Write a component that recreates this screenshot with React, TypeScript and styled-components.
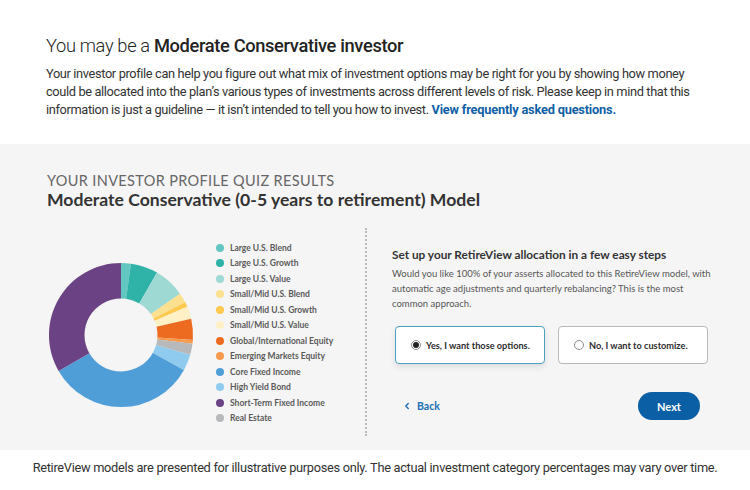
import React from "react";
import styled, { createGlobalStyle } from "styled-components";
import { ChevronLeft } from "lucide-react";

const GlobalStyle = createGlobalStyle`
  html, body {
    margin: 0;
    padding: 0;
    background: #ffffff;
  }
  * {
    box-sizing: border-box;
  }
`;

interface Slice {
  label: string;
  color: string;
  from: number;
  to: number;
}

// angles in degrees, clockwise from 12 o'clock
const slices: Slice[] = [
  { label: "Large U.S. Blend", color: "#62c6c1", from: 0, to: 8 },
  { label: "Large U.S. Growth", color: "#2fb3a8", from: 8, to: 30 },
  { label: "Large U.S. Value", color: "#9ed9d3", from: 30, to: 55 },
  { label: "Small/Mid U.S. Blend", color: "#fbe08f", from: 55, to: 63 },
  { label: "Small/Mid U.S. Growth", color: "#fdc94e", from: 63, to: 67 },
  { label: "Small/Mid U.S. Value", color: "#fff0c6", from: 67, to: 77 },
  { label: "Global/International Equity", color: "#ec6b21", from: 77, to: 94 },
  { label: "Emerging Markets Equity", color: "#f59b50", from: 94, to: 97 },
  { label: "Core Fixed Income", color: "#4f9ed8", from: 119, to: 240 },
  { label: "High Yield Bond", color: "#8ecbef", from: 106, to: 119 },
  { label: "Short-Term Fixed Income", color: "#6b4283", from: 240, to: 360 },
  { label: "Real Estate", color: "#b7b9ba", from: 97, to: 106 },
];

const point = (cx: number, cy: number, r: number, deg: number) => {
  const rad = ((deg - 90) * Math.PI) / 180;
  return [cx + r * Math.cos(rad), cy + r * Math.sin(rad)];
};

const arcPath = (from: number, to: number) => {
  const cx = 75;
  const cy = 75;
  const R = 73;
  const r = 37;
  const end = to >= 360 ? 359.99 : to;
  const large = end - from > 180 ? 1 : 0;
  const [x1, y1] = point(cx, cy, R, from);
  const [x2, y2] = point(cx, cy, R, end);
  const [x3, y3] = point(cx, cy, r, end);
  const [x4, y4] = point(cx, cy, r, from);
  return `M${x1} ${y1} A${R} ${R} 0 ${large} 1 ${x2} ${y2} L${x3} ${y3} A${r} ${r} 0 ${large} 0 ${x4} ${y4} Z`;
};

const Page = styled.div`
  width: 750px;
  font-family: Roboto, "Liberation Sans", sans-serif;
  color: #2b2b2b;
`;

const Intro = styled.section`
  height: 144px;
  padding: 35px 40px 0 46px;
`;

const Title = styled.h1`
  margin: 0 0 8px;
  font-size: 18.3px;
  font-weight: 300;
  letter-spacing: -0.35px;
  line-height: 22px;
  color: #222;

  b {
    font-weight: 500;
  }
`;

const IntroText = styled.p`
  margin: 0;
  font-size: 12.8px;
  line-height: 18px;
  letter-spacing: -0.36px;
  color: #333;
`;

const FaqLink = styled.a`
  color: #0f5fa6;
  font-weight: 700;
  letter-spacing: -0.2px;
  text-decoration: none;
`;

const Band = styled.section`
  background: #f5f5f5;
  height: 306px;
  padding: 28px 0 0 47px;
  font-family: Lato, "Liberation Sans", sans-serif;
`;

const Eyebrow = styled.div`
  font-size: 14.5px;
  font-weight: 400;
  letter-spacing: 0.35px;
  color: #666;
  line-height: 18px;
`;

const ModelTitle = styled.h2`
  margin: 0;
  font-size: 17.6px;
  font-weight: 700;
  color: #333;
  line-height: 20px;
`;

const Content = styled.div`
  display: flex;
  margin-top: 18px;
  height: 210px;
`;

const ChartArea = styled.div`
  width: 318px;
  display: flex;
  align-items: center;
  gap: 21px;
`;

const Donut = styled.svg`
  width: 148px;
  height: 148px;
  flex: none;
  margin-top: 4px;
`;

const Legend = styled.ul`
  list-style: none;
  margin: 0;
  padding: 0;
`;

const LegendItem = styled.li<{ $color: string }>`
  display: flex;
  align-items: center;
  gap: 6px;
  height: 15.5px;
  font-size: 8.5px;
  font-weight: 700;
  color: #5a5a5a;
  white-space: nowrap;

  &::before {
    content: "";
    width: 8px;
    height: 8px;
    border-radius: 50%;
    background: ${(p) => p.$color};
  }
`;

const Divider = styled.div`
  width: 0;
  border-left: 2px dotted #b9b9b9;
  height: 208px;
`;

const Panel = styled.div`
  width: 360px;
  padding: 20px 0 0 25px;
`;

const PanelTitle = styled.h3`
  margin: 0 0 4px;
  font-size: 11.8px;
  font-weight: 700;
  color: #333;
  line-height: 14px;
`;

const PanelText = styled.p`
  margin: 0;
  width: 320px;
  font-size: 9.5px;
  line-height: 15px;
  color: #555;
`;

const Options = styled.div`
  display: flex;
  gap: 13px;
  margin: 15px 0 0 3px;
`;

const Option = styled.label<{ $selected?: boolean }>`
  width: 150px;
  height: 38px;
  flex: none;
  display: flex;
  align-items: center;
  gap: 5px;
  padding-left: 15px;
  background: #fff;
  border-radius: 4px;
  border: 1px solid ${(p) => (p.$selected ? "#4aa3bc" : "#b9b9b9")};
  box-shadow: ${(p) => (p.$selected ? "0 3px 6px rgba(0,0,0,0.1)" : "none")};
  font-size: 9.2px;
  font-weight: 700;
  color: #2d2d2d;
  white-space: nowrap;
`;

const Radio = styled.span<{ $checked?: boolean }>`
  width: 10px;
  height: 10px;
  border-radius: 50%;
  border: 1px solid #8f8f8f;
  display: flex;
  align-items: center;
  justify-content: center;

  &::after {
    content: "";
    width: 6px;
    height: 6px;
    border-radius: 50%;
    background: ${(p) => (p.$checked ? "#222" : "transparent")};
  }
`;

const Actions = styled.div`
  display: flex;
  align-items: center;
  justify-content: space-between;
  margin: 28px 0 0 10px;
  width: 298px;
`;

const BackLink = styled.a`
  display: flex;
  align-items: center;
  gap: 5px;
  color: #1a6fb6;
  font-size: 10.5px;
  font-weight: 700;
  text-decoration: none;
`;

const NextButton = styled.button`
  width: 62px;
  height: 28px;
  border: none;
  border-radius: 14px;
  background: #0b5fa5;
  color: #fff;
  font-family: Lato, "Liberation Sans", sans-serif;
  font-size: 11px;
  font-weight: 700;
`;

const Footer = styled.p`
  margin: 0;
  padding: 10px 0;
  text-align: center;
  font-size: 12.8px;
  line-height: 16px;
  letter-spacing: -0.3px;
  color: #333;
`;

export default function App() {
  return (
    <Page>
      <GlobalStyle />
      <Intro>
        <Title>
          You may be a <b>Moderate Conservative investor</b>
        </Title>
        <IntroText>
          Your investor profile can help you figure out what mix of investment
          options may be right for you by showing how money could be allocated
          into the plan’s various types of investments across different levels
          of risk. Please keep in mind that this information is just a
          guideline — it isn’t intended to tell you how to invest.{" "}
          <FaqLink href="#">View frequently asked questions.</FaqLink>
        </IntroText>
      </Intro>
      <Band>
        <Eyebrow>YOUR INVESTOR PROFILE QUIZ RESULTS</Eyebrow>
        <ModelTitle>
          Moderate Conservative (0-5 years to retirement) Model
        </ModelTitle>
        <Content>
          <ChartArea>
            <Donut viewBox="0 0 150 150">
              {slices.map((s) => (
                <path key={s.label} d={arcPath(s.from, s.to)} fill={s.color} />
              ))}
            </Donut>
            <Legend>
              {slices.map((s) => (
                <LegendItem key={s.label} $color={s.color}>
                  {s.label}
                </LegendItem>
              ))}
            </Legend>
          </ChartArea>
          <Divider />
          <Panel>
            <PanelTitle>
              Set up your RetireView allocation in a few easy steps
            </PanelTitle>
            <PanelText>
              Would you like 100% of your asserts allocated to this RetireView
              model, with automatic age adjustments and quarterly rebalancing?
              This is the most common approach.
            </PanelText>
            <Options>
              <Option $selected>
                <Radio $checked />
                Yes, I want those options.
              </Option>
              <Option>
                <Radio />
                No, I want to customize.
              </Option>
            </Options>
            <Actions>
              <BackLink href="#">
                <ChevronLeft size={10} strokeWidth={3.5} />
                Back
              </BackLink>
              <NextButton>Next</NextButton>
            </Actions>
          </Panel>
        </Content>
      </Band>
      <Footer>
        RetireView models are presented for illustrative purposes only. The
        actual investment category percentages may vary over time.
      </Footer>
    </Page>
  );
}
